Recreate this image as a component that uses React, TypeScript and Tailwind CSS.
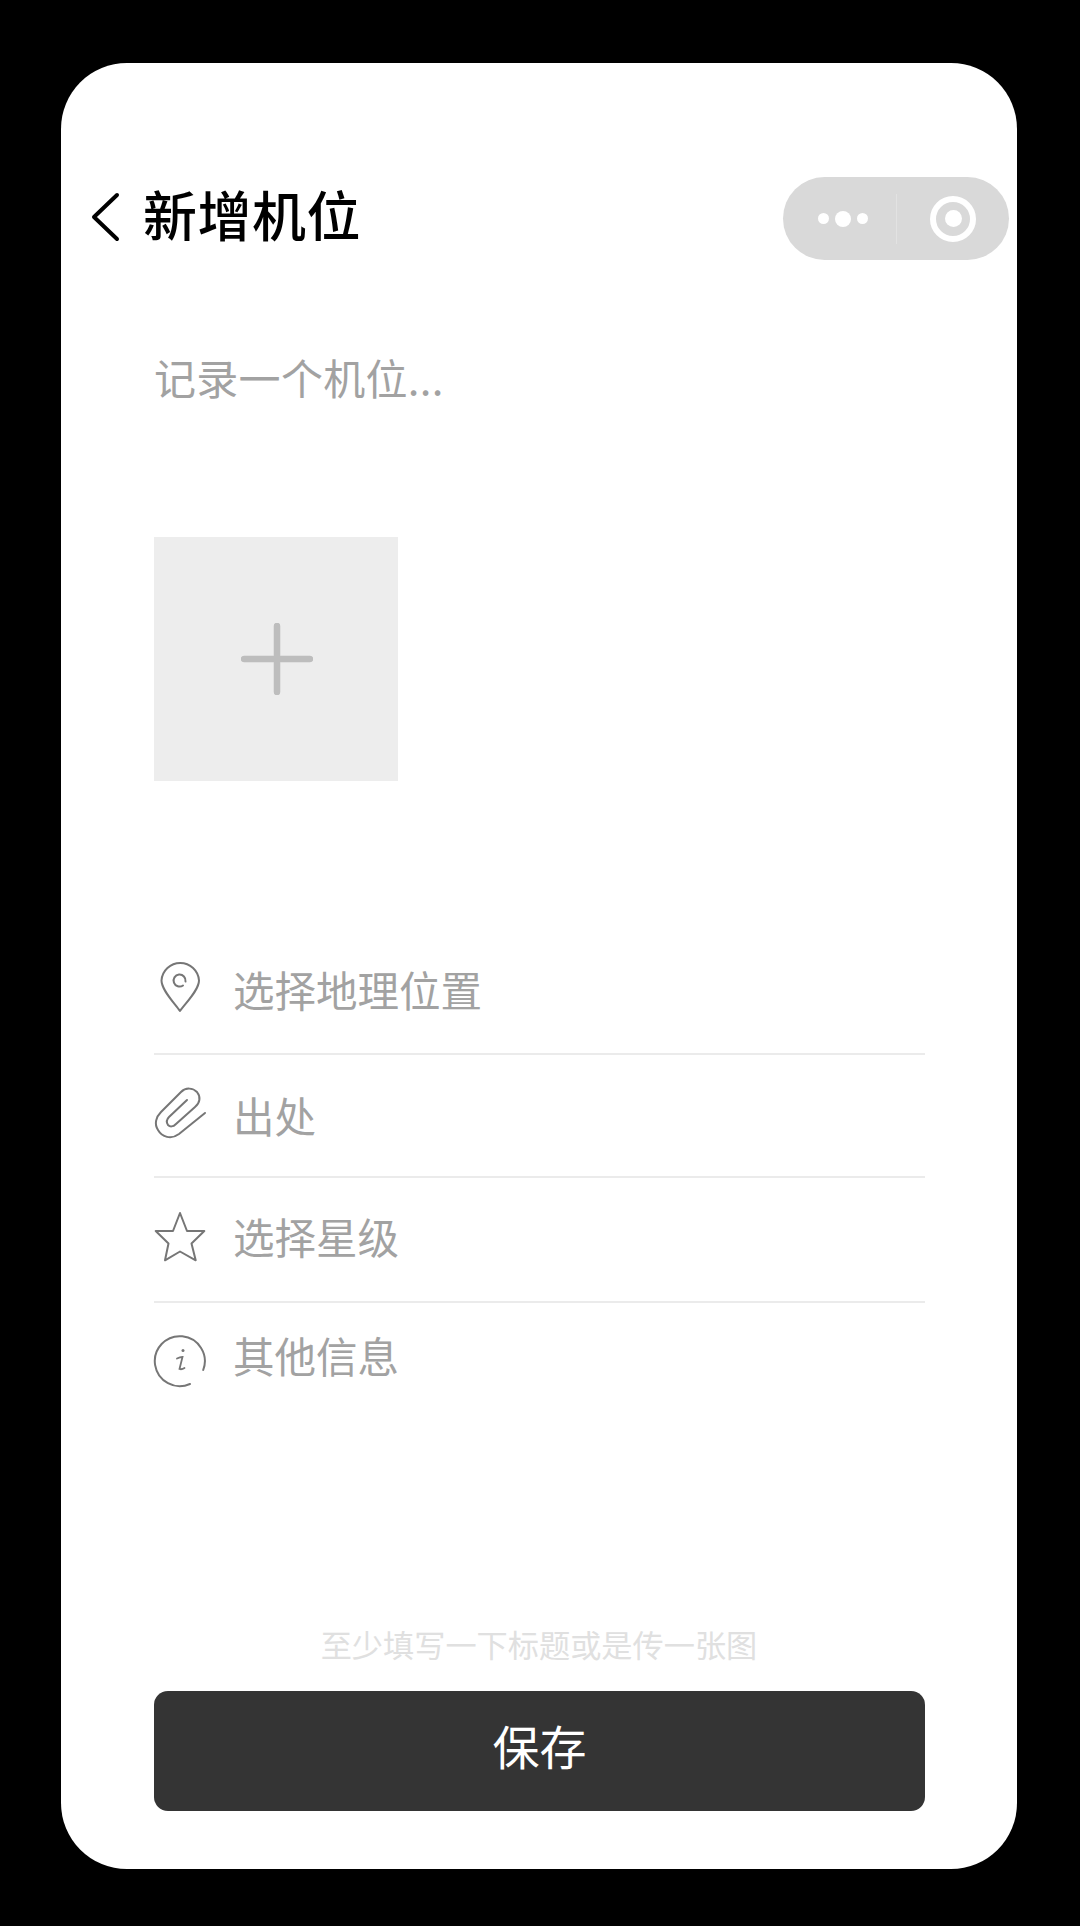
const cjk = "font-['Noto_Sans_CJK_SC','Noto_Sans',sans-serif]";

function PinIcon() {
  return (
    <svg width="42" height="53" viewBox="0 0 42 52" fill="none" stroke="#767676" strokeWidth="2">
      <path d="M20 50.5C14 42 1.5 29.5 1.5 20A18.8 18.8 0 0 1 39 20C39 29.5 26 42 20 50.5Z" strokeLinejoin="round" />
      <path d="M25.5 21A6 6 0 1 0 23 25" strokeLinecap="round" />
    </svg>
  );
}

function ClipIcon() {
  return (
    <svg width="54" height="54" viewBox="0 0 54 54" fill="none" stroke="#767676" strokeWidth="2" strokeLinecap="round">
      <path d="M51 27L25 48C17 54 8 51 4 44C0 38 2 31 7 26L27 6C32 1 39 2 43 6C47 11 46 17 41 21L22 38C19 41 16 41 14 39C12 36 13 33 15 31L33 14" />
    </svg>
  );
}

function StarIcon() {
  return (
    <svg width="52" height="52" viewBox="0 0 52 52" fill="none" stroke="#767676" strokeWidth="2" strokeLinejoin="round">
      <path d="M26 2L33 20H50.3L37.5 32.5L41.7 49.3L26 40.5L11 49.3L14.5 32.5L1.7 20H19Z" />
    </svg>
  );
}

function InfoIcon() {
  return (
    <svg width="54" height="54" viewBox="0 0 54 54" fill="none" stroke="#767676" strokeWidth="2" strokeLinecap="round">
      <path d="M50.2 36A25 25 0 1 0 37 50" />
      <path d="M24 24.5C26 23.5 28 23 29.5 23L26.5 35C28 35.5 30 35 31.5 34" strokeWidth="1.8" />
      <circle cx="30" cy="16.5" r="1.5" fill="#767676" stroke="none" />
    </svg>
  );
}

export default function App() {
  return (
    <div className={`w-[1080px] h-[1926px] bg-black pt-[63px] px-[61px] ${cjk}`}>
      <div className="w-[956px] h-[1806px] bg-white rounded-[66px] flex flex-col">
        <div className="mt-[114px] h-[83px] flex items-center justify-between pl-[28px] pr-[8px]">
          <div className="flex items-center gap-[22px] mb-[9px]">
            <svg className="mt-[5px]" width="32" height="50" viewBox="0 0 32 50" fill="none" stroke="#000" strokeWidth="4" strokeLinecap="round" strokeLinejoin="round">
              <path d="M28 3L5 25L28 47" />
            </svg>
            <span className="text-[54px] leading-[60px] tracking-[0.5px] font-medium text-black">新增机位</span>
          </div>
          <div className="w-[226px] h-[83px] rounded-full bg-[#d9d9d9] flex items-center">
            <div className="w-[113px] flex items-center justify-end gap-[6px] pr-[28px]">
              <span className="w-[11px] h-[11px] rounded-full bg-white" />
              <span className="w-[16px] h-[16px] rounded-full bg-white" />
              <span className="w-[11px] h-[11px] rounded-full bg-white" />
            </div>
            <div className="w-[1px] h-[50px] bg-[#e2e2e2]" />
            <div className="flex-1 flex justify-center">
              <div className="w-[46px] h-[46px] rounded-full border-[6px] border-white flex items-center justify-center">
                <span className="w-[17px] h-[17px] rounded-full bg-white" />
              </div>
            </div>
          </div>
        </div>

        <div className="mt-[87px] mb-[3px] ml-[93px] h-[60px] text-[42px] leading-[60px] tracking-[0.3px] text-[#a2a2a2]">记录一个机位...</div>

        <div className="mt-[127px] ml-[93px] w-[244px] h-[244px] bg-[#ededed] flex items-center justify-center">
          <svg className="ml-[2px] blur-[0.6px]" width="72" height="72" viewBox="0 0 72 72" stroke="#bdbdbd" strokeWidth="6.5" strokeLinecap="round">
            <path d="M36 3V69M3 36H69" />
          </svg>
        </div>

        <div className="mt-[149px] mr-[92px] ml-[93px] flex flex-col text-[41.5px] text-[#a2a2a2]">
          <div className="h-[125px] border-b-2 border-[#ebebeb] flex items-center">
            <div className="w-[80px] pl-[6px] mb-[10px]"><PinIcon /></div>
            <span className="mb-[5px] -ml-[1px]">选择地理位置</span>
          </div>
          <div className="h-[123px] border-b-2 border-[#ebebeb] flex items-center">
            <div className="w-[80px] mb-[6px]"><ClipIcon /></div>
            <span className="mb-[1px] -ml-[1px]">出处</span>
          </div>
          <div className="h-[125px] border-b-2 border-[#ebebeb] flex items-center">
            <div className="w-[80px] mb-[6px]"><StarIcon /></div>
            <span className="mb-[6px] -ml-[1px]">选择星级</span>
          </div>
          <div className="h-[110px] flex items-center">
            <div className="w-[80px] mt-[6px] -ml-[1px]"><InfoIcon /></div>
            <span className="mb-[5px]">其他信息</span>
          </div>
        </div>

        <div className="mt-auto text-center text-[31.2px] leading-[40px] text-[#e0e0e0]">至少填写一下标题或是传一张图</div>
        <button className="mt-[27px] mb-[58px] mr-[92px] ml-[93px] h-[120px] pb-[12px] rounded-[14px] bg-[#343434] text-white text-[47px]">保存</button>
      </div>
    </div>
  );
}
